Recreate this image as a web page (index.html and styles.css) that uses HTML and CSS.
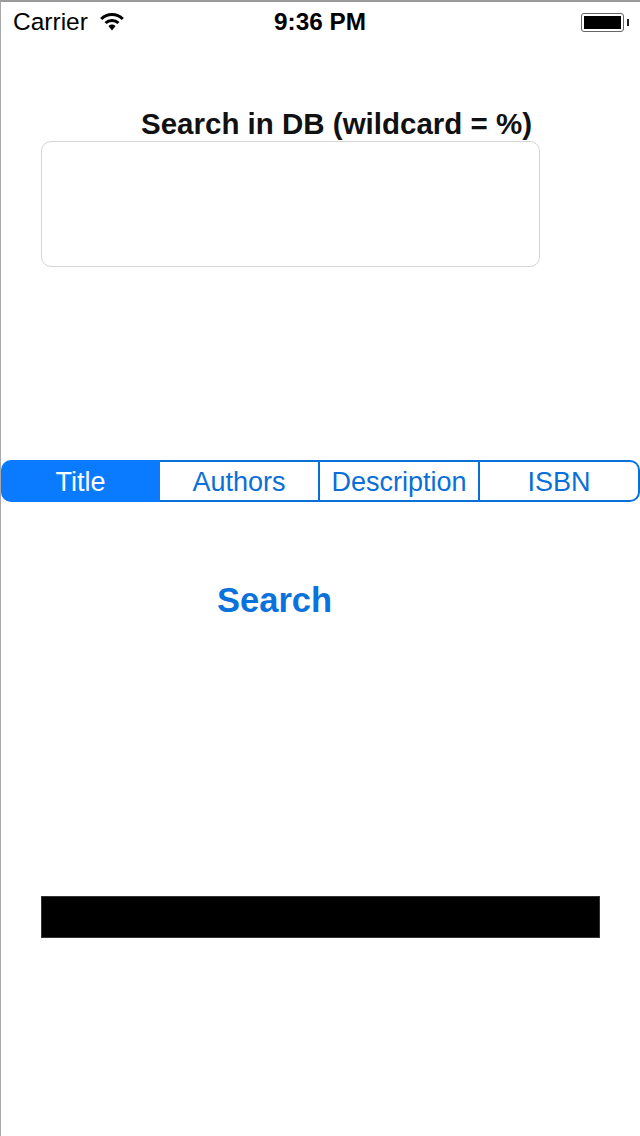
FILE: index.html
```html
<!DOCTYPE html>
<html lang="en">
<head>
  <meta charset="UTF-8" />
  <title>Search in DB</title>
  <link rel="stylesheet" href="styles.css">
</head>
<body>
  <div class="screen">
    <div class="status-bar">
      <div class="status-left">
        <span class="carrier">Carrier</span>
        <svg class="wifi" width="24" height="19" viewBox="0 0 24 19">
          <path d="M1.2 7 A15.5 15.5 0 0 1 22.8 7" fill="none" stroke="#000" stroke-width="3"/>
          <path d="M5.5 11 A9.5 9.5 0 0 1 18.5 11" fill="none" stroke="#000" stroke-width="3"/>
          <path d="M8.5 14 A5 5 0 0 1 15.5 14 L12 18.5 Z" fill="#000"/>
        </svg>
      </div>
      <span class="clock">9:36 PM</span>
      <div class="battery">
        <div class="battery-body"><div class="battery-level"></div></div>
        <div class="battery-tip"></div>
      </div>
    </div>

    <div class="search-form">
      <div class="label">Search in DB (wildcard = %)</div>
      <div class="search-box"></div>
    </div>

    <div class="segments">
      <div class="segment active">Title</div>
      <div class="segment">Authors</div>
      <div class="segment">Description</div>
      <div class="segment">ISBN</div>
    </div>

    <div class="search-row">
      <button class="search-btn">Search</button>
    </div>

    <div class="result-bar"></div>
  </div>
</body>
</html>
```

FILE: styles.css
```css
* {
  margin: 0;
  padding: 0;
  box-sizing: border-box;
}

html, body {
  height: 100%;
  background: #fff;
  font-family: "Liberation Sans", Arial, sans-serif;
  overflow: hidden;
}

.screen {
  width: 640px;
  height: 1136px;
  border-top: 2px solid #9a9a9a;
  border-left: 1px solid #a8a8a8;
}

.status-bar {
  display: grid;
  grid-template-columns: 1fr auto 1fr;
  align-items: center;
  height: 40px;
  padding: 0 11px 0 12px;
  color: #000;
}

.status-left {
  display: flex;
  align-items: center;
  gap: 12px;
}

.carrier {
  font-size: 24.5px;
}

.wifi {
  margin-top: -1px;
}

.clock {
  font-size: 24.3px;
  font-weight: bold;
  margin-left: -2px;
}

.battery {
  display: flex;
  align-items: center;
  justify-content: flex-end;
  gap: 3px;
}

.battery-body {
  width: 43px;
  height: 19px;
  border: 1px solid #666;
  border-radius: 3px;
  padding: 2px;
}

.battery-level {
  width: 100%;
  height: 100%;
  background: #000;
}

.battery-tip {
  width: 2px;
  height: 7px;
  background: #222;
}

.search-form {
  margin-top: 64px;
  padding-left: 40px;
}

.label {
  font-size: 29.5px;
  font-weight: bold;
  line-height: 35px;
  padding-left: 100px;
  color: #111;
  white-space: nowrap;
}

.search-box {
  width: 499px;
  height: 126px;
  border: 1px solid #d4d4d4;
  border-radius: 10px;
}

.segments {
  display: grid;
  grid-template-columns: 159px 160px 160px 1fr;
  height: 42px;
  margin-top: 193px;
}

.segment {
  display: flex;
  align-items: center;
  justify-content: center;
  padding-top: 2px;
  font-size: 27px;
  color: #0a6fd8;
  border: 2px solid #0a6fd8;
  border-left-width: 0;
}

.segment:first-child {
  border-left-width: 2px;
  border-radius: 10px 0 0 10px;
}

.segment:last-child {
  border-radius: 0 10px 10px 0;
}

.segment.active {
  background: #0a7aff;
  border-color: #0a7aff;
  color: #fff;
}

.search-row {
  margin-top: 76px;
  padding-left: 216px;
}

.search-btn {
  border: none;
  background: none;
  font-family: inherit;
  font-size: 34.5px;
  font-weight: bold;
  line-height: 44px;
  color: #0a72dc;
}

.result-bar {
  width: 559px;
  height: 42px;
  margin: 274px 0 0 40px;
  background: #000;
  border: 1px solid #333;
}
```
